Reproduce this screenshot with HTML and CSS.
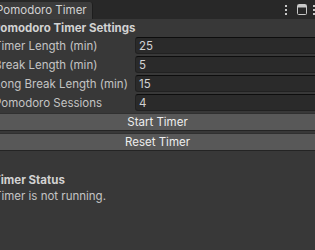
FILE: index.html
```html
<html>
<head>
  <meta charset="utf-8">
  <title>Pomodoro Timer</title>
  <link rel="stylesheet" href="styles.css">
</head>
<body>
  <div class="tabbar">
    <div class="tab">Pomodoro Timer</div>
    <div class="tools">
      <svg class="kebab" width="4" height="12" viewBox="0 0 4 12">
        <rect x="1" y="1" width="2" height="2"/>
        <rect x="1" y="5" width="2" height="2"/>
        <rect x="1" y="9" width="2" height="2"/>
      </svg>
      <svg class="maxi" width="10" height="11" viewBox="0 0 10 11">
        <rect x="0.5" y="0.5" width="9" height="10" rx="1" fill="none" stroke="#c8c8c8"/>
        <rect x="1" y="1" width="8" height="2.5" fill="#c8c8c8"/>
      </svg>
      <svg class="kebab" width="4" height="12" viewBox="0 0 4 12">
        <rect x="1" y="1" width="2" height="2"/>
        <rect x="1" y="5" width="2" height="2"/>
        <rect x="1" y="9" width="2" height="2"/>
      </svg>
    </div>
  </div>

  <div class="panel">
    <div class="heading">Pomodoro Timer Settings</div>

    <div class="row">
      <span class="label">Timer Length (min)</span>
      <span class="field">25</span>
    </div>
    <div class="row">
      <span class="label">Break Length (min)</span>
      <span class="field">5</span>
    </div>
    <div class="row">
      <span class="label">Long Break Length (min)</span>
      <span class="field">15</span>
    </div>
    <div class="row">
      <span class="label">Pomodoro Sessions</span>
      <span class="field">4</span>
    </div>

    <div class="btn">Start Timer</div>
    <div class="btn">Reset Timer</div>

    <div class="heading status">Timer Status</div>
    <div class="text">Timer is not running.</div>
  </div>
</body>
</html>
```

FILE: styles.css
```css
body {
  margin: 0;
  width: 315px;
  height: 250px;
  overflow: hidden;
  background-color: #383838;
  font-family: Inter, "Noto Sans", sans-serif;
  font-size: 11.5px;
  color: #c4c4c4;
}

.tabbar {
  display: flex;
  justify-content: space-between;
  align-items: flex-end;
  height: 19px;
  background-color: #282828;
}

.tab {
  height: 17px;
  line-height: 17px;
  width: 98px;
  margin-left: -5px;
  box-sizing: border-box;
  padding-left: 1px;
  white-space: nowrap;
  background-color: #3c3c3c;
  border-right: 1px solid #1e1e1e;
  border-top-right-radius: 3px;
  color: #d2d2d2;
}

.tools {
  display: flex;
  align-self: center;
  align-items: center;
  margin-right: -1px;
}

.tools .kebab {
  fill: #c8c8c8;
}

.tools .maxi {
  margin: 0 5px 0 9px;
}

.panel {
  width: 333px;
  margin-left: -9px;
}

.heading {
  height: 18px;
  line-height: 19px;
  padding-left: 2px;
  font-weight: 700;
  white-space: nowrap;
  color: #d2d2d2;
}

.row {
  display: flex;
  align-items: center;
  height: 17px;
  margin-bottom: 2px;
}

.label {
  width: 144px;
  box-sizing: border-box;
  padding-left: 3px;
  white-space: nowrap;
}

.field {
  flex: 1;
  height: 17px;
  line-height: 16px;
  box-sizing: border-box;
  padding-left: 3px;
  background-color: #2a2a2a;
  border: 1px solid #212121;
  border-top-color: #0d0d0d;
  border-radius: 3px;
  color: #d2d2d2;
}

.btn {
  height: 18px;
  line-height: 16px;
  box-sizing: border-box;
  margin: 0 0 2px 0;
  text-align: center;
  background-color: #585858;
  border: 1px solid #303030;
  border-bottom-color: #242424;
  border-radius: 3px;
  color: #eeeeee;
}

.heading.status {
  margin-top: 20px;
}

.text {
  height: 15px;
  line-height: 15px;
  padding-left: 3px;
  white-space: nowrap;
}
```
